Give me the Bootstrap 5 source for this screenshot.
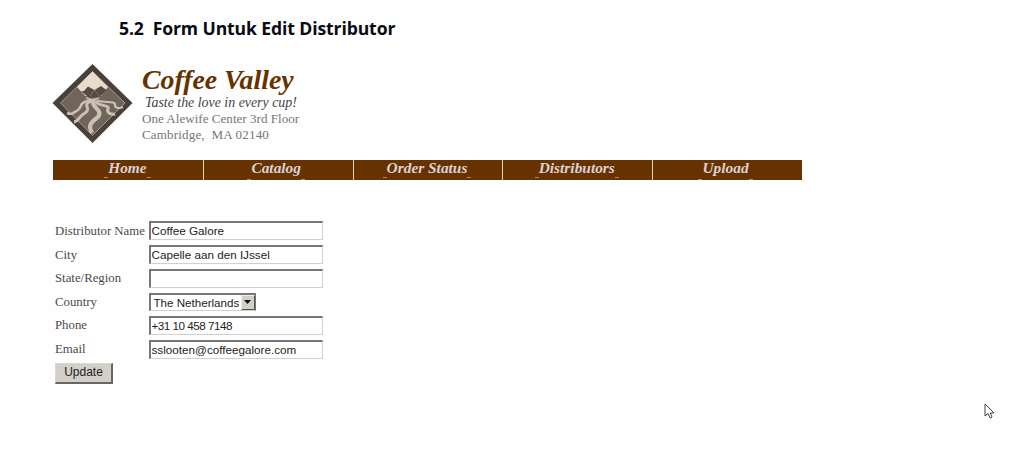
<!DOCTYPE html>
<html lang="id">
<head>
<meta charset="utf-8">
<title>Coffee Valley</title>
<link href="https://cdn.jsdelivr.net/npm/bootstrap@5.3.0/dist/css/bootstrap.min.css" rel="stylesheet">
<style>
body{background:#fefefe;color:#555;font-family:"Liberation Serif",serif;height:463px;overflow:hidden}
h1{font:bold 17.6px/22px "Open Sans",sans-serif;letter-spacing:-.12px;color:#0a0a14;padding:17px 0 0 119px;height:64px;white-space:pre}
.brand-row{height:96px;padding-left:52px;gap:9px}
.logo{width:81px;height:80px;flex:none}
.brand-text{padding-top:1px;white-space:nowrap}
.brand-name{font:italic bold 27.8px/29px "Liberation Serif",serif;color:#663300}
.tagline{font:italic 13.9px/17px "Liberation Serif",serif;color:#444;padding-left:3px}
.addr{font-size:13.1px;line-height:16px;color:#777}
.addr + .addr{letter-spacing:.13px}
.main-nav{width:749px;height:20px;margin-left:53px;background:#663300}
.main-nav a{font:italic bold 15.4px/16px "Liberation Serif",serif;color:#ddd0d4;text-decoration:none;text-align:center;border-left:1px solid #e3d3b5;height:20px}
.main-nav a:first-child{border-left-color:#663300}
.main-nav span{position:relative;display:inline-block;left:-1px}
.main-nav .low{left:-2px}
.main-nav span::before,.main-nav span::after{content:"";position:absolute;top:17px;width:4px;height:1px;background:#b08c60}
.main-nav span::before{left:-4px}
.main-nav span::after{right:-4px}
.main-nav .low::before,.main-nav .low::after{top:19px}
.dist-form{margin:39px 0 0 55px;width:268px}
.frow{height:23.8px}
.frow label{width:93.5px;font-size:12.8px;line-height:20px;white-space:nowrap;flex:none;color:#4b4b4b}
.frow .form-control,.pick{height:19px;min-height:0;padding:0 0 0 1px;border:1px solid #d0d0d0;border-top:2px solid #777;border-left:2px solid #777;border-radius:0;background:#fff;font:11.7px/15px "Liberation Sans",sans-serif;color:#222}
.frow .form-control{width:174px;padding-bottom:1px}
.pick{width:107px;height:18px;padding-left:3px;border-right:1px solid #777;font-size:11.6px;line-height:15px}
.arrow{width:14px;height:15px;background:#d4d0c8;border:1px solid #eee;border-right-color:#555;border-bottom-color:#555}
.btn-old{width:58px;height:21px;padding:0;border:1px solid #d8d8d8;border-right:2px solid #666;border-bottom:2px solid #666;border-radius:0;background:#d2d0c9;font:12px/17px "Liberation Sans",sans-serif;color:#222;margin-top:2px}
.pointer{position:absolute;left:984px;top:403px}
</style>
</head>
<body class="position-relative">
<h1 class="m-0">5.2  Form Untuk Edit Distributor</h1>
<header class="d-flex brand-row">
  <svg class="logo" viewBox="0 0 81 80">
    <path d="M40.500 0L80.500 39L40.500 79L0.500 39Z" fill="#4a403b"/>
    <path d="M40.500 7.500L73 39L40.500 71.500L8.500 39Z" fill="#70655c" stroke="#b9aa9b" stroke-width=".8"/>
    <path d="M40.500 7.500L56 23L49 32H33L25 23Z" fill="#eadccd"/>
    <path d="M29 27.500L32 27L36 22.500L42.500 26L49 22L54.500 26L47 33.500H37Z" fill="#574a43"/>
    <path d="M30 28L37 34M42 26L38 32M42.500 26L48 33" fill="none" stroke="#8e8176" stroke-width=".7"/>
    <g fill="none" stroke="#cdbfb1">
      <path d="M34 34Q40 37 47 34" stroke-width="1.500"/>
      <path d="M42 36.500C25 37 31 43 26 46C21 49 20 51 15 49" stroke-width="2.600"/>
      <path d="M42 36.500C27 40 41 44 33 49C25 53 28 57 22 58" stroke-width="3"/>
      <path d="M43 36.500C36 42 52 45 46 53C38 59 36 62 40 69" stroke-width="4.200"/>
      <path d="M44 36.500C44 43 58 40 56 45C54 49 60 51 63 50" stroke-width="3"/>
      <path d="M45 36.500C52 39 63 37 63 40C62 44 67 45 71 43" stroke-width="2.200"/>
    </g>
  </svg>
  <div class="brand-text">
    <div class="brand-name">Coffee Valley</div>
    <div class="tagline">Taste the love in every cup!</div>
    <div class="addr">One Alewife Center 3rd Floor</div>
    <div class="addr">Cambridge,&nbsp; MA 02140</div>
  </div>
</header>
<nav class="main-nav d-flex">
  <a class="col" href="#"><span>Home</span></a>
  <a class="col" href="#"><span class="low">Catalog</span></a>
  <a class="col" href="#"><span>Order Status</span></a>
  <a class="col" href="#"><span>Distributors</span></a>
  <a class="col" href="#"><span class="low">Upload</span></a>
</nav>
<form class="dist-form">
  <div class="frow d-flex align-items-center"><label for="n">Distributor Name</label><input id="n" class="form-control" value="Coffee Galore"></div>
  <div class="frow d-flex align-items-center"><label for="c">City</label><input id="c" class="form-control" value="Capelle aan den IJssel"></div>
  <div class="frow d-flex align-items-center"><label for="s">State/Region</label><input id="s" class="form-control"></div>
  <div class="frow d-flex align-items-center" style="height:23px"><label>Country</label><div class="pick d-flex justify-content-between"><span class="text-nowrap">The Netherlands</span><span class="arrow d-flex align-items-center justify-content-center"><svg width="7" height="4"><path d="M0 0H7L3.500 4Z" fill="#111"/></svg></span></div></div>
  <div class="frow d-flex align-items-center"><label for="p">Phone</label><input id="p" class="form-control" style="letter-spacing:-.5px" value="+31 10 458 7148"></div>
  <div class="frow d-flex align-items-center"><label for="e">Email</label><input id="e" class="form-control" value="sslooten@coffeegalore.com"></div>
  <button type="button" class="btn btn-old d-block">Update</button>
</form>
<svg class="pointer" width="12" height="18" viewBox="0 0 12 18"><path d="M1 1V13L4 10.500L6 15L8 14L6.300 10H10Z" fill="#fff" stroke="#444"/></svg>
<script src="https://cdn.jsdelivr.net/npm/bootstrap@5.3.0/dist/js/bootstrap.bundle.min.js"></script>
</body>
</html>
